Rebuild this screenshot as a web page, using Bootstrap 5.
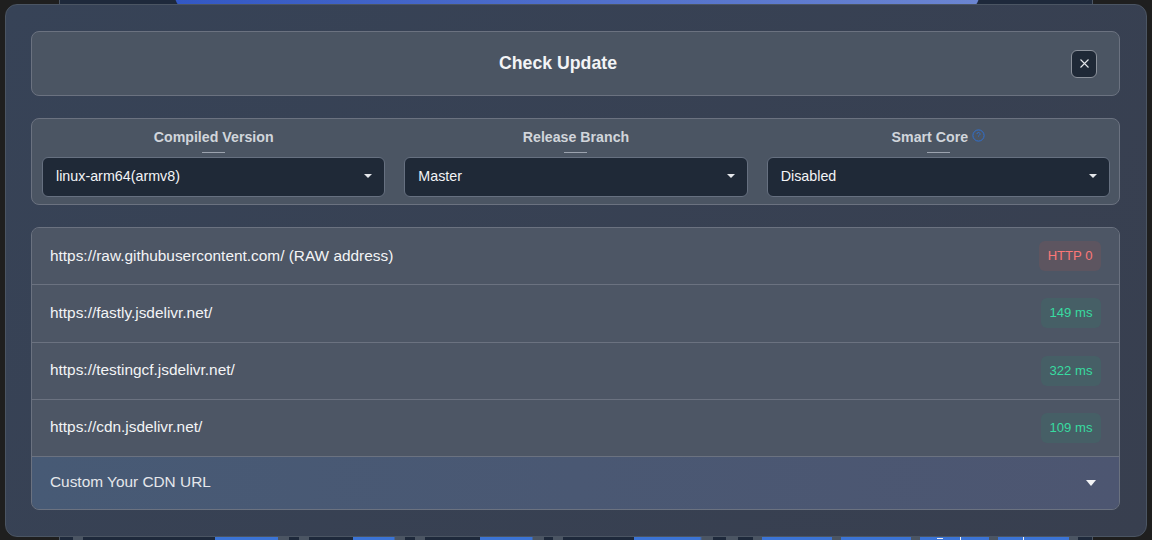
<!DOCTYPE html>
<html lang="en">
<head>
<meta charset="utf-8">
<title>Check Update</title>
<link href="https://cdn.jsdelivr.net/npm/bootstrap@5.3.0/dist/css/bootstrap.min.css" rel="stylesheet">
<style>
html,body{height:100%;overflow:hidden;background:#1f1f1f;font-family:"Liberation Sans",Arial,sans-serif;}
.page-bg{position:absolute;left:59px;top:0;width:1034px;height:540px;background:#1e293b;border-left:1px solid #4b5563;border-right:1px solid #4b5563;overflow:hidden;}
.top-bar{position:absolute;left:115px;width:804px;top:-20px;height:30px;border-radius:14px;background:linear-gradient(90deg,#3358c4,#6b85d1);}
.bot-strip{position:absolute;left:0;right:0;top:530px;height:10px;background:
 linear-gradient(#f3f4f6,#f3f4f6) 877px 8px/6px 1px no-repeat,
 linear-gradient(#f3f4f6,#f3f4f6) 900px 7px/1px 3px no-repeat,
 linear-gradient(#f3f4f6,#f3f4f6) 963px 7px/1px 3px no-repeat,
 linear-gradient(90deg,
 transparent 13px,#4b5563 13px 23px,transparent 23px 155px,#3b74d6 155px 218px,#4b5563 218px 229px,transparent 229px 239px,#4b5563 239px 249px,
 transparent 249px 293px,#3b74d6 293px 334px,#4b5563 335px 345px,transparent 345px 355px,#4b5563 355px 365px,transparent 365px 420px,
 #3b74d6 420px 472px,#4b5563 473px 484px,transparent 484px 493px,#4b5563 493px 503px,transparent 503px 574px,#3b74d6 574px 640px,
 #4b5563 642px 653px,transparent 653px 666px,#4b5563 666px 678px,transparent 678px 693px,#4b5563 693px 702px,#3b74d6 702px 772px,
 #4b5563 772px 781px,#3b74d6 781px 851px,#4b5563 851px 860px,#3b74d6 860px 929px,#4b5563 929px 938px,#3b74d6 938px 1009px,#4b5563 1009px 1018px,transparent 1018px);}
.modal-box{position:absolute;left:5px;top:4px;width:1142px;height:533px;background:linear-gradient(135deg,#374357,#383f4f);border:1px solid #4b5563;border-radius:12px;padding:26px 26px 26px 25px;display:flex;flex-direction:column;}
.panel{background:#4b5563;border:1px solid #6b7280;border-radius:8px;}
.head-panel{height:65px;margin-bottom:22px;padding-right:22px;}
.head-title{font-size:17.7px;font-weight:700;color:#f3f4f6;line-height:1;margin-right:-13px;}
.x-btn{width:26px;height:28px;padding:0;background:#1f2937;border:1px solid #8b919b;border-radius:6px;position:relative;}
.opts-panel{height:87px;margin-bottom:22px;padding:0 9px 0 10px;gap:19px;}
.opt{flex:1 1 0;min-width:0;}
.opt-label{font-size:14.2px;font-weight:700;color:#d1d5db;line-height:16px;padding-top:10px;height:26px;}
.opt-rule{width:23px;height:1px;background:#9ca3af;margin:7px auto 4px;}
.sel{height:40px;background:#1f2937;border:1px solid #667080;border-radius:6px;color:#f3f4f6;font-size:14.3px;padding:0 12px 0 13px;}
.caret-mark{width:0;height:0;border-left:4px solid transparent;border-right:4px solid transparent;border-top:4px solid #e5e7eb;margin-bottom:2px;}
.cdn-list{overflow:hidden;}
.cdn-row{height:57.25px;padding:0 18px;border-bottom:1px solid #6b7280;color:#f3f4f6;font-size:15.4px;background:#4d5665;}
.cdn-text{position:relative;top:-1px;}
.lat{font-size:13.1px;border-radius:6px;padding:0 8.5px;height:30px;line-height:29px;}
.lat-bad{background:#5d5560;color:#fb7878;}
.lat-ok{background:#465f66;color:#38dba0;}
.custom-row{height:52px;padding:0 23px 0 18px;color:#e5e7eb;font-size:15.4px;background:linear-gradient(90deg,#475a75,#4d5671);}
.custom-row .caret-mark{border-left-width:5.5px;border-right-width:5.5px;border-top-width:6px;border-top-color:#f3f4f6;margin-bottom:0;}
</style>
</head>
<body>
<div class="page-bg">
  <div class="top-bar"></div>
  <div class="bot-strip"></div>
</div>
<div class="modal-box">
  <div class="panel head-panel d-flex align-items-center">
    <div class="head-title flex-grow-1 text-center">Check Update</div>
    <button type="button" class="x-btn d-flex align-items-center justify-content-center" aria-label="Close">
      <svg width="9" height="9" viewBox="0 0 9 9"><path d="M.5.5l8 8M8.5.5l-8 8" stroke="#e5e7eb" stroke-width="1.1" fill="none"/></svg>
    </button>
  </div>
  <div class="panel opts-panel d-flex">
    <div class="opt text-center">
      <div class="opt-label">Compiled Version</div>
      <div class="opt-rule"></div>
      <div class="sel d-flex align-items-center justify-content-between"><span>linux-arm64(armv8)</span><i class="caret-mark"></i></div>
    </div>
    <div class="opt text-center">
      <div class="opt-label">Release Branch</div>
      <div class="opt-rule"></div>
      <div class="sel d-flex align-items-center justify-content-between"><span>Master</span><i class="caret-mark"></i></div>
    </div>
    <div class="opt text-center">
      <div class="opt-label">Smart Core <svg class="align-baseline" width="13" height="13" viewBox="0 0 13 13"><circle cx="6.5" cy="6.5" r="5.6" fill="none" stroke="#3070d0" stroke-width="1"/><path d="M5 5a1.5 1.5 0 1 1 2.2 1.3c-.4.3-.7.5-.7 1.2" fill="none" stroke="#3070d0" stroke-width=".9"/></svg></div>
      <div class="opt-rule"></div>
      <div class="sel d-flex align-items-center justify-content-between"><span>Disabled</span><i class="caret-mark"></i></div>
    </div>
  </div>
  <div class="panel cdn-list">
    <div class="cdn-row d-flex align-items-center justify-content-between"><span class="cdn-text">https://raw.githubusercontent.com/ (RAW address)</span><span class="lat lat-bad">HTTP 0</span></div>
    <div class="cdn-row d-flex align-items-center justify-content-between"><span class="cdn-text">https://fastly.jsdelivr.net/</span><span class="lat lat-ok">149 ms</span></div>
    <div class="cdn-row d-flex align-items-center justify-content-between"><span class="cdn-text">https://testingcf.jsdelivr.net/</span><span class="lat lat-ok">322 ms</span></div>
    <div class="cdn-row d-flex align-items-center justify-content-between"><span class="cdn-text">https://cdn.jsdelivr.net/</span><span class="lat lat-ok">109 ms</span></div>
    <div class="custom-row d-flex align-items-center justify-content-between"><span class="cdn-text">Custom Your CDN URL</span><i class="caret-mark"></i></div>
  </div>
</div>
<script src="https://cdn.jsdelivr.net/npm/bootstrap@5.3.0/dist/js/bootstrap.bundle.min.js"></script>
</body>
</html>
